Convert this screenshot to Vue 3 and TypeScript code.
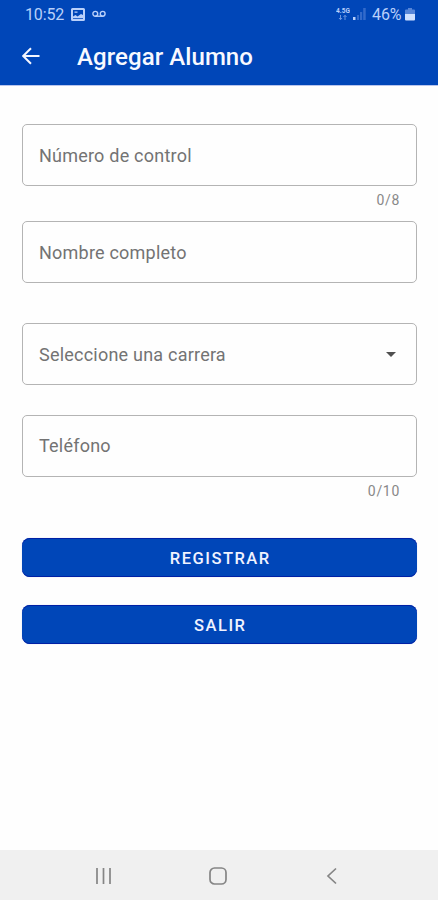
<script setup lang="ts">
import { ref } from 'vue'

interface Field {
  id: string
  label: string
  max?: number
  select?: boolean
}

const fields: Field[] = [
  { id: 'control', label: 'Número de control', max: 8 },
  { id: 'nombre', label: 'Nombre completo' },
  { id: 'carrera', label: 'Seleccione una carrera', select: true },
  { id: 'telefono', label: 'Teléfono', max: 10 },
]
const values = ref<Record<string, string>>({ control: '', nombre: '', carrera: '', telefono: '' })
</script>

<template>
  <div class="screen">
    <header class="top">
      <div class="status">
        <span class="clock">10:52</span>
        <svg class="picture" width="14" height="13" viewBox="0 0 14 13">
          <path fill-rule="evenodd" d="M1.5 0h11Q14 0 14 1.5v10Q14 13 12.500 13h-11Q0 13 0 11.500v-10Q0 0 1.500 0ZM2 2v6.500l2.500-1.500 2 1.500 3.500-2.500 2 1V2ZM3.500 3.500h3v1.300h-3ZM2 10.200v.8h10v-.8Z" />
        </svg>
        <svg class="voicemail" width="14" height="8" viewBox="0 0 14 8">
          <circle cx="3.300" cy="3.800" r="2.400" />
          <circle cx="10.700" cy="3.800" r="2.400" />
          <path d="M3.300 6.200h7.400" />
        </svg>
        <span class="spacer"></span>
        <svg class="network" width="14" height="15" viewBox="0 0 14 15">
          <text x="0" y="6" textLength="14">4.5G</text>
          <path d="M4.500 8v4.500M3 11l1.500 1.700L6 11M9 13V8.500M7.500 10L9 8.300l1.500 1.700" />
        </svg>
        <svg class="signal" width="13" height="12" viewBox="0 0 13 12">
          <path class="on" d="M0 9h2.500v3H0Z" />
          <path d="M4 7h2v5H4ZM7 4h2.200v8H7ZM10.200 0h2.500v12h-2.500Z" />
        </svg>
        <span class="percent">46%</span>
        <svg class="battery" width="10" height="13" viewBox="0 0 10 13">
          <path class="empty" d="M3 0h4v1.500h2q1 0 1 1V6H0V2.500q0-1 1-1h2Z" />
          <path d="M0 6h10v5.500q0 1-1 1H1q-1 0-1-1Z" />
        </svg>
      </div>
      <div class="toolbar">
        <svg class="back" width="18" height="18" viewBox="0 0 18 18">
          <path d="M17.500 9H1.500M9 1.200L1.200 9 9 16.800" />
        </svg>
        <h1>Agregar Alumno</h1>
      </div>
    </header>

    <main class="form">
      <div v-for="field in fields" :key="field.id" class="field" :class="field.id">
        <div class="box">
          <span class="label">{{ field.label }}</span>
          <svg v-if="field.select" class="caret" width="10" height="5" viewBox="0 0 10 5">
            <path d="M0 0h10L5 5Z" />
          </svg>
        </div>
        <div v-if="field.max" class="counter">{{ values[field.id].length }}/{{ field.max }}</div>
      </div>
      <button type="button">REGISTRAR</button>
      <button type="button">SALIR</button>
    </main>

    <nav class="nav">
      <svg width="18" height="18" viewBox="0 0 18 18"><path d="M2 1v16M8.500 1v16M15 1v16" /></svg>
      <svg width="18" height="18" viewBox="0 0 18 18"><rect x="1" y="1" width="16" height="16" rx="4.500" /></svg>
      <svg width="18" height="18" viewBox="0 0 18 18"><path d="M13 1.500L5 9l8 7.500" /></svg>
    </nav>
  </div>
</template>

<style>
body {
  background: #fefefe;
}
</style>

<style scoped>
.screen {
  box-sizing: border-box;
  width: 100%;
  height: 900px;
  display: flex;
  flex-direction: column;
  font-family: Roboto, "Liberation Sans", sans-serif;
}
svg {
  display: block;
  flex: none;
}
.top {
  box-sizing: border-box;
  height: 86px;
  background: #0046b8;
  border-bottom: 1px solid #b9c5ed;
}
.status {
  display: flex;
  align-items: center;
  height: 28px;
  padding: 0 23px 0 25px;
  font-size: 16px;
  color: #b9d0fa;
  fill: #b9d0fa;
}
.clock {
  width: 39px;
  white-space: nowrap;
  letter-spacing: -0.150px;
}
.picture {
  margin-left: 7px;
}
.voicemail {
  margin-left: 7px;
  fill: none;
  stroke: #b9d0fa;
  stroke-width: 1.400;
}
.spacer {
  flex: 1;
}
.network text {
  font-size: 6.500px;
  font-weight: 700;
}
.network path {
  fill: none;
  stroke: #6e97df;
  stroke-width: 1;
}
.signal {
  margin-left: 3px;
  fill: #326acb;
}
.signal .on {
  fill: #b9d0fa;
}
.percent {
  margin-left: 6px;
  width: 29px;
  letter-spacing: -0.100px;
}
.battery {
  margin-left: 4px;
  fill: #cfe0ff;
}
.battery .empty {
  fill: #5685d8;
}
.toolbar {
  display: flex;
  align-items: center;
  height: 56px;
  padding-left: 22px;
}
.back {
  fill: none;
  stroke: #f4f6ff;
  stroke-width: 2;
}
h1 {
  margin: 2px 0 0 37px;
  font-size: 24px;
  line-height: 30px;
  font-weight: 500;
  letter-spacing: 0.080px;
  color: #f8f9ff;
}
.form {
  flex: 1;
  padding: 38px 21px 0 22px;
}
.field {
  box-sizing: border-box;
}
.control {
  height: 97px;
}
.nombre {
  height: 102px;
}
.carrera {
  height: 91.500px;
}
.telefono {
  height: 123.500px;
}
.box {
  box-sizing: border-box;
  display: flex;
  align-items: center;
  justify-content: space-between;
  height: 62px;
  padding: 0 20px 0 16px;
  border: 1px solid #b4b4b4;
  border-radius: 5px;
}
.label {
  font-size: 18px;
  letter-spacing: 0.220px;
  color: #737373;
}
.caret {
  fill: #505050;
}
.counter {
  padding: 5px 17px 0 0;
  font-size: 14px;
  line-height: 18px;
  letter-spacing: 0.700px;
  text-align: right;
  color: #888;
}
button {
  display: block;
  width: 100%;
  height: 39px;
  margin: 0 0 28px;
  padding: 2px 0 0;
  border: 0;
  border-radius: 8px;
  background: #0046b8;
  box-shadow: inset 0 1px #0020a5, inset 0 -1px #0020a5, 0 0 1px #a9b8e2;
  font: 500 16.500px/37px Roboto, "Liberation Sans", sans-serif;
  letter-spacing: 1.500px;
  text-indent: 1.500px;
  color: #f0f3ff;
}
.nav {
  box-sizing: border-box;
  display: flex;
  align-items: center;
  justify-content: space-between;
  height: 50px;
  padding: 2px 97px 0 95px;
  background: #f0f0f0;
}
.nav svg {
  fill: none;
  stroke: #858585;
  stroke-width: 1.700;
}
</style>
